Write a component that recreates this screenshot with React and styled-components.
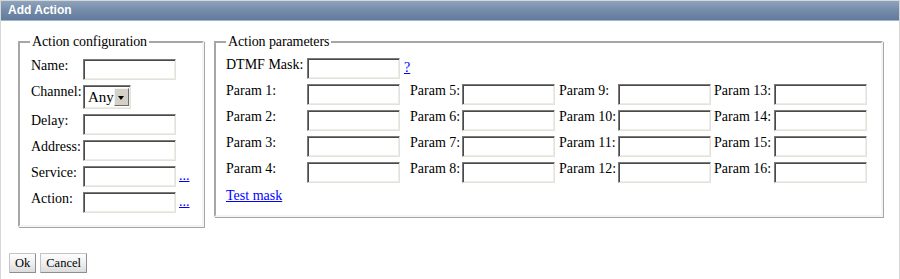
import React from "react";
import styled, { createGlobalStyle } from "styled-components";

const Global = createGlobalStyle`
  html, body { margin: 0; padding: 0; background: #fff; }
  body { font-family: "Liberation Serif", "Times New Roman", serif; font-size: 14px; color: #000; }
`;

const Panel = styled.div`
  box-sizing: border-box;
  width: 900px;
  height: 282px;
  border: 1px solid #d6d6d6;
  border-bottom: none;
  background: #fff;
`;

const Header = styled.div`
  height: 19px;
  line-height: 19px;
  padding-left: 7px;
  background: linear-gradient(to bottom, #8ea3bd 0%, #768daa 45%, #627b9c 100%);
  border-bottom: 1px solid #a3b3c8;
  color: #fff;
  font-family: "Liberation Sans", Arial, sans-serif;
  font-weight: bold;
  font-size: 12px;
`;

const Body = styled.div`
  padding: 13px 0 0 17px;
  display: flex;
  align-items: flex-start;
  gap: 10px;
`;

const Fieldset = styled.fieldset`
  box-sizing: border-box;
  width: ${(p) => p.$w}px;
  margin: 0;
  padding: ${(p) => p.$pt}px 10px ${(p) => p.$pb}px 10px;
  border: 2px solid;
  border-color: #a6a6a6 #f4f4f4 #f4f4f4 #a6a6a6;
  box-shadow: inset 1px 1px 0 #ffffff, 1px 1px 0 #a6a6a6;
  min-inline-size: 0;
`;

const Legend = styled.legend`
  padding: 0 2px;
  line-height: 16px;
  font-size: 14px;
  letter-spacing: -0.1px;
`;

const ConfigGrid = styled.div`
  display: grid;
  grid-template-columns: 53px 93px auto;
  row-gap: 4px;
  align-items: start;
`;

const ParamGrid = styled.div`
  display: grid;
  grid-template-columns: 81px 93px 10px 52px 93px 63px 93px 63px 93px;
  row-gap: 4px;
  align-items: start;
`;

const Label = styled.span`
  line-height: 16px;
  white-space: nowrap;
  padding-left: ${(p) => p.$pl || 0}px;
`;

const TextInput = styled.input`
  box-sizing: border-box;
  width: 93px;
  height: 21px;
  margin: 1px 0 0 0;
  padding: 0 2px;
  border: 1px solid;
  border-color: #7a7a7a #e4e2dc #e4e2dc #7a7a7a;
  box-shadow: inset 1px 1px 0 #4a4a4a, inset -1px -1px 0 #eeece6;
  background: #fff;
  font-family: inherit;
  font-size: 14px;
  outline: none;
`;

const Link = styled.a`
  color: #0000ff;
  text-decoration: underline;
  line-height: 16px;
  padding-left: ${(p) => p.$pl || 0}px;
  margin-top: ${(p) => p.$mt || 0}px;
  cursor: pointer;
`;

const SelectBox = styled.div`
  box-sizing: border-box;
  width: 48px;
  height: 24px;
  margin-top: 1px;
  display: flex;
  align-items: stretch;
  border: 1px solid;
  border-color: #7a7a7a #e4e2dc #e4e2dc #7a7a7a;
  box-shadow: inset 1px 1px 0 #4a4a4a, inset -1px -1px 0 #eeece6;
  background: #fff;
  padding: 2px 1px 2px 2px;
`;

const SelectValue = styled.span`
  flex: 1;
  font-size: 15px;
  line-height: 19px;
  padding-left: 2px;
`;

const DropButton = styled.span`
  box-sizing: border-box;
  width: 16px;
  display: flex;
  align-items: center;
  justify-content: center;
  background: #d4d0c8;
  border: 1px solid;
  border-color: #f4f3ef #6e6c67 #6e6c67 #f4f3ef;
`;

const Arrow = styled.span`
  width: 0;
  height: 0;
  border-left: 3.5px solid transparent;
  border-right: 3.5px solid transparent;
  border-top: 4px solid #000;
  margin-top: 1px;
`;

const FullRow = styled.div`
  grid-column: 1 / -1;
  margin-top: 1px;
`;

const Buttons = styled.div`
  display: flex;
  gap: 4px;
  padding: 26px 0 0 8px;
`;

const Button = styled.button`
  box-sizing: border-box;
  height: 20px;
  padding: 0 5px;
  margin: 0;
  font-family: "Liberation Serif", "Times New Roman", serif;
  font-size: 12.5px;
  line-height: 16px;
  color: #000;
  background: linear-gradient(to bottom, #fdfdfd 0%, #eeeeee 55%, #dcdcdc 100%);
  border: 1px solid;
  border-color: #c4c4c4 #8e8e8e #8e8e8e #c4c4c4;
  border-radius: 1px;
`;

const configRows = [
  { label: "Name:", kind: "input" },
  { label: "Channel:", kind: "select" },
  { label: "Delay:", kind: "input" },
  { label: "Address:", kind: "input" },
  { label: "Service:", kind: "input", more: true },
  { label: "Action:", kind: "input", more: true },
];

export default function App() {
  const paramRows = [1, 2, 3, 4];
  return (
    <>
      <Global />
      <Panel>
        <Header>Add Action</Header>
        <Body>
          <Fieldset $w={186} $pt={8} $pb={12}>
            <Legend>Action configuration</Legend>
            <ConfigGrid>
              {configRows.map((r) => (
                <React.Fragment key={r.label}>
                  <Label $pl={1}>{r.label}</Label>
                  {r.kind === "select" ? (
                    <SelectBox>
                      <SelectValue>Any</SelectValue>
                      <DropButton>
                        <Arrow />
                      </DropButton>
                    </SelectBox>
                  ) : (
                    <TextInput type="text" />
                  )}
                  {r.more ? <Link $pl={3} $mt={3}>...</Link> : <span />}
                </React.Fragment>
              ))}
            </ConfigGrid>
          </Fieldset>
          <Fieldset $w={669} $pt={7} $pb={11}>
            <Legend>Action parameters</Legend>
            <ParamGrid>
              <Label>DTMF Mask:</Label>
              <TextInput type="text" />
              <Link $pl={4} $mt={3}>?</Link>
              <span style={{ gridColumn: "4 / -1" }} />
              {paramRows.map((n) => (
                <React.Fragment key={n}>
                  <Label>Param {n}:</Label>
                  <TextInput type="text" />
                  <span />
                  <Label>Param {n + 4}:</Label>
                  <TextInput type="text" />
                  <Label $pl={4}>Param {n + 8}:</Label>
                  <TextInput type="text" />
                  <Label $pl={3}>Param {n + 12}:</Label>
                  <TextInput type="text" />
                </React.Fragment>
              ))}
              <FullRow>
                <Link>Test mask</Link>
              </FullRow>
            </ParamGrid>
          </Fieldset>
        </Body>
        <Buttons>
          <Button>Ok</Button>
          <Button>Cancel</Button>
        </Buttons>
      </Panel>
    </>
  );
}
